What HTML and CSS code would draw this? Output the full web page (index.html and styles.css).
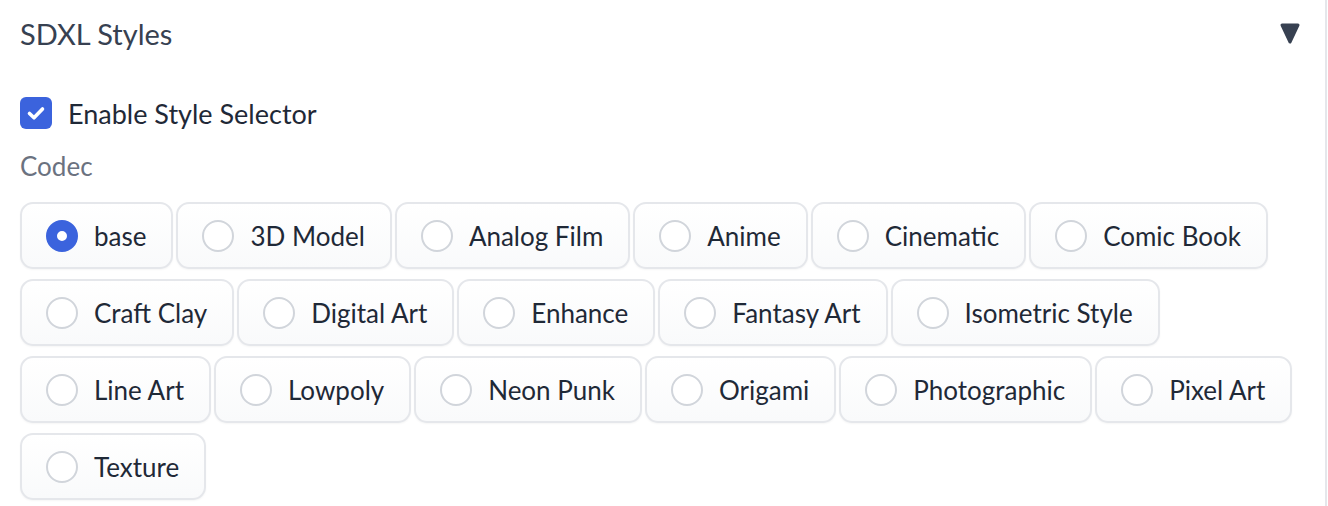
FILE: index.html
```html
<!DOCTYPE html>
<html>
<head>
<meta charset="utf-8">
<link rel="stylesheet" href="styles.css">
</head>
<body>
<div class="panel">
  <div class="header">
    <span class="title">SDXL Styles</span>
    <svg class="caret" width="20" height="21" viewBox="0 0 20 21"><polygon points="2,2 18,2 10,19" fill="#374151" stroke="#374151" stroke-width="3" stroke-linejoin="round"/></svg>
  </div>
  <label class="check-row">
    <span class="checkbox"><svg width="32" height="32" viewBox="0 0 32 32"><path d="M9.5 16.5 L14 20.8 L22.5 12" fill="none" stroke="#fff" stroke-width="3.6" stroke-linecap="round" stroke-linejoin="round"/></svg></span>
    <span class="check-label">Enable Style Selector</span>
  </label>
  <div class="group-label">Codec</div>
  <div class="radios">
    <label class="pill"><span class="dot on"></span><span>base</span></label>
    <label class="pill"><span class="dot"></span><span>3D Model</span></label>
    <label class="pill"><span class="dot"></span><span>Analog Film</span></label>
    <label class="pill"><span class="dot"></span><span>Anime</span></label>
    <label class="pill"><span class="dot"></span><span>Cinematic</span></label>
    <label class="pill"><span class="dot"></span><span>Comic Book</span></label>
    <label class="pill"><span class="dot"></span><span>Craft Clay</span></label>
    <label class="pill"><span class="dot"></span><span>Digital Art</span></label>
    <label class="pill"><span class="dot"></span><span>Enhance</span></label>
    <label class="pill"><span class="dot"></span><span>Fantasy Art</span></label>
    <label class="pill"><span class="dot"></span><span>Isometric Style</span></label>
    <label class="pill"><span class="dot"></span><span>Line Art</span></label>
    <label class="pill"><span class="dot"></span><span>Lowpoly</span></label>
    <label class="pill"><span class="dot"></span><span>Neon Punk</span></label>
    <label class="pill"><span class="dot"></span><span>Origami</span></label>
    <label class="pill"><span class="dot"></span><span>Photographic</span></label>
    <label class="pill"><span class="dot"></span><span>Pixel Art</span></label>
    <label class="pill"><span class="dot"></span><span>Texture</span></label>
  </div>
</div>
</body>
</html>
```
FILE: styles.css
```css
html, body {
  margin: 0;
  padding: 0;
  background: #ffffff;
}
body {
  font-family: "Lato", "Liberation Sans", sans-serif;
  color: #1f2937;
}
.panel {
  width: 1327px;
  height: 506px;
  box-sizing: border-box;
  border-right: 2px solid #e5e7eb;
  padding: 14px 20px 0 20px;
  overflow: hidden;
}
.header {
  display: flex;
  justify-content: space-between;
  align-items: center;
  height: 40px;
  padding-right: 5px;
}
.title {
  font-size: 29px;
  color: #374151;
  line-height: 40px;
}
.caret {
  display: block;
  margin-top: -2px;
}
.check-row {
  display: flex;
  align-items: center;
  gap: 16px;
  margin-top: 43px;
  height: 32px;
}
.checkbox {
  width: 32px;
  height: 32px;
  border-radius: 6px;
  background: #3b63dd;
  display: block;
}
.checkbox svg { display: block; }
.check-label {
  font-size: 27px;
  color: #1f2937;
}
.group-label {
  font-size: 26px;
  color: #6b7280;
  margin-top: 20px;
  line-height: 34px;
}
.radios {
  display: flex;
  flex-wrap: wrap;
  gap: 10px 3px;
  margin-top: 19px;
}
.pill {
  display: flex;
  align-items: center;
  gap: 16px;
  height: 67px;
  box-sizing: border-box;
  padding: 0 25px;
  border: 2px solid #e5e7eb;
  border-radius: 13px;
  background: linear-gradient(#ffffff, #f9fafb);
  box-shadow: 0 1px 2px rgba(0,0,0,0.04);
  font-size: 26px;
  color: #1f2937;
}
.dot {
  width: 32px;
  height: 32px;
  box-sizing: border-box;
  border-radius: 50%;
  border: 2px solid #d1d5db;
  background: #ffffff;
  flex: none;
  margin-left: -1px;
}
.dot.on {
  border: 11px solid #3b63dd;
  background: #ffffff;
}
```
